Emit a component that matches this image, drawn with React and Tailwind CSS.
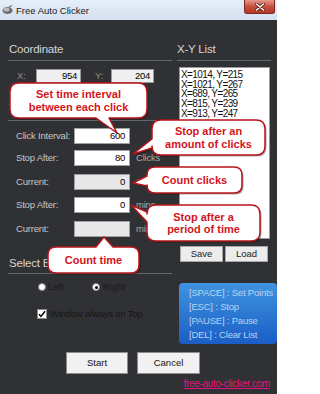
import React from "react";

function bubble(x, y, w, h, r, side, a, b, tx, ty) {
  const R = x + w, B = y + h;
  let d = `M${x + r},${y}`;
  if (side === "top") d += ` L${a},${y} L${tx},${ty} L${b},${y}`;
  d += ` L${R - r},${y} Q${R},${y} ${R},${y + r}`;
  if (side === "right") d += ` L${R},${a} L${tx},${ty} L${R},${b}`;
  d += ` L${R},${B - r} Q${R},${B} ${R - r},${B}`;
  if (side === "bottom") d += ` L${b},${B} L${tx},${ty} L${a},${B}`;
  d += ` L${x + r},${B} Q${x},${B} ${x},${B - r}`;
  if (side === "left") d += ` L${x},${b} L${tx},${ty} L${x},${a}`;
  d += ` L${x},${y + r} Q${x},${y} ${x + r},${y} Z`;
  return d;
}

const shapes = [
  bubble(10, 83, 137, 35, 9, "bottom", 96, 109, 117, 133),
  bubble(152, 120, 113, 35, 9, "left", 139, 148, 133, 154),
  bubble(147, 167, 95, 26, 8, "left", 176, 186, 133, 183),
  bubble(147, 205, 113, 36, 9, "left", 212, 222, 131, 205),
  bubble(48, 247, 91, 26, 8, "top", 96, 113, 104, 237),
];

function Callouts() {
  return (
    <>
      <svg className="pointer-events-none absolute left-0 top-0" width="277" height="394" viewBox="0 0 277 394">
        {shapes.map((d, i) => (
          <path key={"s" + i} d={d} transform="translate(1.5 1.5)" fill="rgba(0,0,0,0.35)" />
        ))}
        {shapes.map((d, i) => (
          <path key={"p" + i} d={d} fill="#ffffff" stroke="#b8141b" strokeWidth="1.5" strokeLinejoin="round" />
        ))}
      </svg>
      <div className="pointer-events-none absolute left-[10px] top-[83px] flex h-[35px] w-[137px] flex-col items-center justify-center text-[11px] font-bold leading-[12.5px] text-[#d3141c]">
        <span>Set time interval</span>
        <span>between each click</span>
      </div>
      <div className="pointer-events-none absolute left-[152px] top-[120px] flex h-[35px] w-[113px] flex-col items-center justify-center text-[11px] font-bold leading-[12.5px] text-[#d3141c]">
        <span>Stop after an</span>
        <span>amount of clicks</span>
      </div>
      <div className="pointer-events-none absolute left-[147px] top-[167px] flex h-[26px] w-[95px] flex-col items-center justify-center text-[11px] font-bold leading-[12.5px] text-[#d3141c]">
        <span>Count clicks</span>
      </div>
      <div className="pointer-events-none absolute left-[147px] top-[205px] flex h-[36px] w-[113px] flex-col items-center justify-center text-[11px] font-bold leading-[12.5px] text-[#d3141c]">
        <span>Stop after a</span>
        <span>period of time</span>
      </div>
      <div className="pointer-events-none absolute left-[48px] top-[247px] flex h-[26px] w-[91px] flex-col items-center justify-center text-[11px] font-bold leading-[12.5px] text-[#d3141c]">
        <span>Count time</span>
      </div>
    </>
  );
}

function TitleBar() {
  return (
    <div className="flex h-[20px] items-start bg-gradient-to-b from-[#e6eef8] to-[#d4e1f0]">
      <svg className="ml-[2px] mt-[5px]" width="11" height="10" viewBox="0 0 11 10">
        <ellipse cx="5.5" cy="5.5" rx="5" ry="3.6" fill="#6b6e73" />
        <ellipse cx="4.5" cy="4.5" rx="3" ry="2" fill="#b8bcc2" />
        <path d="M7 2 L10 0.5" stroke="#555" strokeWidth="1" />
      </svg>
      <span className="ml-[3px] pt-[4px] text-[9.5px] leading-[13px] text-[#1b1b1b]">Free Auto Clicker</span>
      <div className="ml-auto mr-[2px] flex h-[14px] w-[31px] items-center justify-center rounded-b-[3px] border border-t-0 border-[#7a2a22] bg-gradient-to-b from-[#e2998c] via-[#c9503f] to-[#b33623]">
        <svg width="10" height="8" viewBox="0 0 10 8">
          <path d="M1.5 1 L8.5 7 M8.5 1 L1.5 7" stroke="#5a1a12" strokeWidth="3" strokeLinecap="round" />
          <path d="M1.5 1 L8.5 7 M8.5 1 L1.5 7" stroke="#ffffff" strokeWidth="1.6" strokeLinecap="round" />
        </svg>
      </div>
    </div>
  );
}

function Header({ children, mt }) {
  return (
    <>
      <div className={`${mt} h-[16px] pl-[1px] text-[11.5px] leading-[16px] tracking-[-0.2px] text-[#d4d4d4]`}>{children}</div>
      <div className="mt-[3px] h-px bg-[#646569]" />
    </>
  );
}

function Row({ mt, label, value, grey, suffix }) {
  return (
    <div className={`${mt} flex h-[16px] items-center`}>
      <span className="ml-[8px] w-[58px] text-[9.5px] tracking-[-0.2px] text-[#c6c6c6]">{label}</span>
      <div
        className={`h-[16px] w-[56px] border border-[#a0a0a0] pr-[4px] text-right text-[9.5px] leading-[14px] tracking-[-0.3px] text-black ${
          grey ? "bg-[#e8e8e8]" : "bg-white"
        }`}
      >
        {value}
      </div>
      {suffix ? <span className="ml-[6px] text-[9.5px] tracking-[-0.2px] text-[#a9a9a9]">{suffix}</span> : null}
    </div>
  );
}

function LeftCol() {
  return (
    <div className="ml-[8px] flex w-[164px] flex-col">
      <div className="mt-[21px] h-[16px] pl-[1px] text-[11.5px] leading-[16px] tracking-[-0.2px] text-[#d4d4d4]">Coordinate</div>
      <div className="mt-[3px] h-px bg-[#646569]" />
      <div className="mt-[8px] flex h-[14px] items-center">
        <span className="ml-[9px] w-[19px] text-[9.5px] text-[#8e8e8e]">X:</span>
        <div className="h-[14px] w-[45px] border border-[#9a9a9a] bg-[#efefef] pr-[3px] text-right text-[9.5px] leading-[12px] tracking-[-0.3px] text-black">954</div>
        <span className="ml-[14px] w-[16px] text-[9.5px] text-[#8e8e8e]">Y:</span>
        <div className="h-[14px] w-[43px] border border-[#9a9a9a] bg-[#efefef] pr-[3px] text-right text-[9.5px] leading-[12px] tracking-[-0.3px] text-black">204</div>
      </div>
      <div className="mt-[17px] h-[16px] pl-[1px] text-[11.5px] leading-[16px] tracking-[-0.2px] text-[#d4d4d4]">Time</div>
      <div className="mt-[4px] h-px bg-[#646569]" />
      <Row mt="mt-[7px]" label="Click Interval:" value="600" />
      <Row mt="mt-[6px]" label="Stop After:" value="80" suffix="Clicks" />
      <Row mt="mt-[8px]" label="Current:" value="0" grey suffix="Clicks" />
      <Row mt="mt-[7px]" label="Stop After:" value="0" suffix="mins" />
      <Row mt="mt-[8px]" label="Current:" value="" grey suffix="mins" />
      <div className="mt-[18px] h-[16px] pl-[1px] text-[11.5px] leading-[16px] tracking-[-0.2px] text-[#d4d4d4]">Select Button</div>
      <div className="mt-[2px] h-px bg-[#646569]" />
      <div className="mt-[7px] flex h-[12px] items-center">
        <div className="ml-[30px] h-[8px] w-[8px] rounded-full border border-[#8a8a8a] bg-white" />
        <span className="ml-[2px] w-[44px] text-[9.5px] text-[#1a1a1a]">Left</span>
        <div className="flex h-[8px] w-[8px] items-center justify-center rounded-full border border-[#8a8a8a] bg-white">
          <div className="h-[3px] w-[3px] rounded-full bg-black" />
        </div>
        <span className="ml-[3px] text-[9.5px] text-[#1a1a1a]">Right</span>
      </div>
      <div className="mt-[15px] flex h-[12px] items-center">
        <div className="ml-[29px] flex h-[10px] w-[10px] items-center justify-center border border-[#8a8a8a] bg-white">
          <svg width="8" height="8" viewBox="0 0 8 8">
            <path d="M1 4.2 L3 6.4 L7 1.2" fill="none" stroke="#000" strokeWidth="1.5" />
          </svg>
        </div>
        <span className="ml-[3px] text-[9.5px] tracking-[-0.2px] text-[#161616]">Window always on Top</span>
      </div>
    </div>
  );
}

function RightCol() {
  const pts = ["X=1014, Y=215", "X=1021, Y=267", "X=689, Y=265", "X=815, Y=239", "X=913, Y=247"];
  return (
    <div className="ml-[5px] flex w-[100px] flex-col">
      <div className="mt-[21px] h-[16px] text-[11.5px] leading-[16px] tracking-[-0.2px] text-[#d4d4d4]">X-Y List</div>
      <div className="mt-[3px] h-px w-[94px] bg-[#646569]" />
      <div className="ml-[2px] mt-[6px] h-[172px] w-[91px] border border-[#9a9a9a] bg-white pl-[1px] pt-[2px] text-[10px] leading-[9.7px] tracking-[-0.6px] text-[#111]">
        {pts.map((p) => (
          <div key={p}>{p}</div>
        ))}
      </div>
      <div className="mt-[7px] flex">
        <button className="ml-[3px] h-[16px] w-[43px] border border-[#a8a8a8] bg-[#ececec] text-[9.5px] leading-[14px] text-[#1a1a1a]">Save</button>
        <button className="ml-[2px] h-[16px] w-[43px] border border-[#a8a8a8] bg-[#ececec] text-[9.5px] leading-[14px] text-[#1a1a1a]">Load</button>
      </div>
      <div className="ml-[2px] mt-[21px] h-[61px] w-[98px] rounded-[4px] bg-gradient-to-b from-[#3f93df] to-[#1b5ec6] pl-[10px] pt-[3px] text-[9.5px] leading-[14px] tracking-[-0.2px] text-[#bcd2f2]">
        <div>[SPACE] : Set Points</div>
        <div>[ESC] : Stop</div>
        <div>[PAUSE] : Pause</div>
        <div>[DEL] : Clear List</div>
      </div>
    </div>
  );
}

export default function App() {
  return (
    <div className="relative h-[394px] w-[277px] overflow-hidden bg-[#303134] font-['Liberation_Sans',Arial,sans-serif]">
      <TitleBar />
      <div className="flex">
        <LeftCol />
        <RightCol />
      </div>
      <div className="mt-[8px] flex">
        <button className="ml-[66px] h-[22px] w-[62px] border border-[#8c8c8c] bg-[#f1f1f1] text-[9.5px] text-[#111]">Start</button>
        <button className="ml-[9px] h-[22px] w-[63px] border border-[#8c8c8c] bg-[#f1f1f1] text-[9.5px] text-[#111]">Cancel</button>
      </div>
      <div className="mt-[4px] flex h-[12px] justify-end pr-[7px]">
        <a className="text-[10px] leading-[12px] tracking-[-0.3px] text-[#e4127a] underline">free-auto-clicker.com</a>
      </div>
      <Callouts />
    </div>
  );
}
